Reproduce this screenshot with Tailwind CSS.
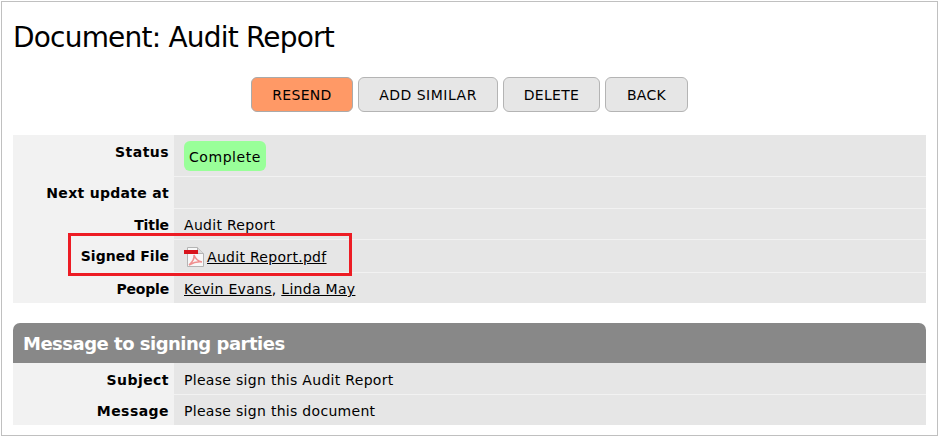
<!DOCTYPE html>
<html lang="en">
  <head>
    <meta charset="UTF-8" />
    <title>Document: Audit Report</title>
    <script src="https://cdn.jsdelivr.net/npm/@tailwindcss/browser@4"></script>
  </head>
  <body class="bg-white font-['DejaVu_Sans',sans-serif] text-black">
    <div class="relative ml-px mt-px w-[937px] h-[435px] border border-[#c0c0c0] px-[11px]">
      <h1 class="h-[75px] pt-[18px] text-[28px] leading-[36px] tracking-[-0.8px]">Document: Audit Report</h1>

      <!-- Кнопки -->
      <div class="flex justify-center gap-[5px] h-[58px] text-[14px] tracking-[0.3px]">
        <button class="w-[102px] h-[35px] pt-px rounded-[6px] border border-[#aaaaaa] bg-[#ff9966]">RESEND</button>
        <button class="w-[140px] h-[35px] pt-px rounded-[6px] border border-[#b4b4b4] bg-[#e6e6e6] tracking-[0.5px]">ADD SIMILAR</button>
        <button class="w-[97px] h-[35px] pt-px rounded-[6px] border border-[#b4b4b4] bg-[#e6e6e6]">DELETE</button>
        <button class="w-[83px] h-[35px] pt-px rounded-[6px] border border-[#b4b4b4] bg-[#e6e6e6]">BACK</button>
      </div>

      <!-- Детали документа -->
      <div class="w-[913px] text-[14px] tracking-[0.3px]">
        <div class="flex h-[42px] border-b border-[#f2f2f2]">
          <div class="w-[161px] shrink-0 bg-[#f2f2f2] pr-[5px] pt-[8px] text-right font-bold leading-[18px] tracking-[0.45px]">Status</div>
          <div class="flex-1 bg-[#e6e6e6] pl-[10px] pt-[6px]">
            <span class="inline-block h-[30px] rounded-[6px] bg-[#99ff99] px-[5px] leading-[32px] tracking-[0.55px]">Complete</span>
          </div>
        </div>
        <div class="flex h-[32px] border-b border-[#f2f2f2]">
          <div class="w-[161px] shrink-0 bg-[#f2f2f2] pr-[5px] pt-[7px] text-right font-bold leading-[18px]">Next update at</div>
          <div class="flex-1 bg-[#e6e6e6]"></div>
        </div>
        <div class="flex h-[31px] border-b border-[#f2f2f2]">
          <div class="w-[161px] shrink-0 bg-[#f2f2f2] pr-[5px] pt-[7px] text-right font-bold leading-[18px] tracking-[-0.1px]">Title</div>
          <div class="flex-1 bg-[#e6e6e6] pl-[10px] pt-[7px] leading-[18px]">Audit Report</div>
        </div>
        <div class="flex h-[33px] border-b border-[#f2f2f2]">
          <div class="w-[161px] shrink-0 bg-[#f2f2f2] pr-[5px] pt-[7px] text-right font-bold leading-[18px] tracking-[0.03px]">Signed File</div>
          <div class="flex flex-1 items-start bg-[#e6e6e6] pl-[10px] pt-[7px] leading-[20px]">
            <svg class="mr-[3px] shrink-0" width="20" height="20" viewBox="0 0 20 20">
              <path d="M3.500 .5H13.500L19.500 6.500V19.500H3.500Z" fill="#f8f8f8" stroke="#b4b4b4" />
              <path d="M13.500 .5V6.500H19.500" fill="#dcdcdc" stroke="#b4b4b4" />
              <rect x="0" y="3" width="14" height="4" fill="#d8141c" />
              <path d="M5 18C8.500 15 10.500 11 10 8C11.500 12 14 14.500 18 15C14 14.500 9.500 15.500 5 18Z" fill="none" stroke="#f09090" stroke-width="1.500" />
            </svg>
            <a href="#" class="underline">Audit Report.pdf</a>
          </div>
        </div>
        <div class="flex h-[30px]">
          <div class="w-[161px] shrink-0 bg-[#f2f2f2] pr-[5px] pt-[7px] text-right font-bold leading-[18px] tracking-[-0.2px]">People</div>
          <div class="flex-1 bg-[#e6e6e6] pl-[10px] pt-[7px] leading-[18px]"><a href="#" class="underline">Kevin Evans</a>, <a href="#" class="underline">Linda May</a></div>
        </div>

        <!-- Сообщение -->
        <div class="mt-[20px] h-[40px] rounded-t-[7px] bg-[#888888] pl-[10px] text-[18px] font-bold leading-[41px] tracking-[-0.5px] text-white">Message to signing parties</div>
        <div class="flex h-[32px] border-b border-[#f2f2f2]">
          <div class="w-[161px] shrink-0 bg-[#f2f2f2] pr-[5px] pt-[8px] text-right font-bold leading-[18px] tracking-[0.45px]">Subject</div>
          <div class="flex-1 bg-[#e6e6e6] pl-[10px] pt-[8px] leading-[18px]">Please sign this Audit Report</div>
        </div>
        <div class="flex h-[30px]">
          <div class="w-[161px] shrink-0 bg-[#f2f2f2] pr-[5px] pt-[7px] text-right font-bold leading-[18px] tracking-[0.45px]">Message</div>
          <div class="flex-1 bg-[#e6e6e6] pl-[10px] pt-[7px] leading-[18px]">Please sign this document</div>
        </div>
      </div>

      <!-- Красная рамка поверх строки -->
      <div class="absolute left-[66px] top-[231px] w-[284px] h-[43px] border-[3px] border-[#ed1c24]"></div>
    </div>
  </body>
</html>
